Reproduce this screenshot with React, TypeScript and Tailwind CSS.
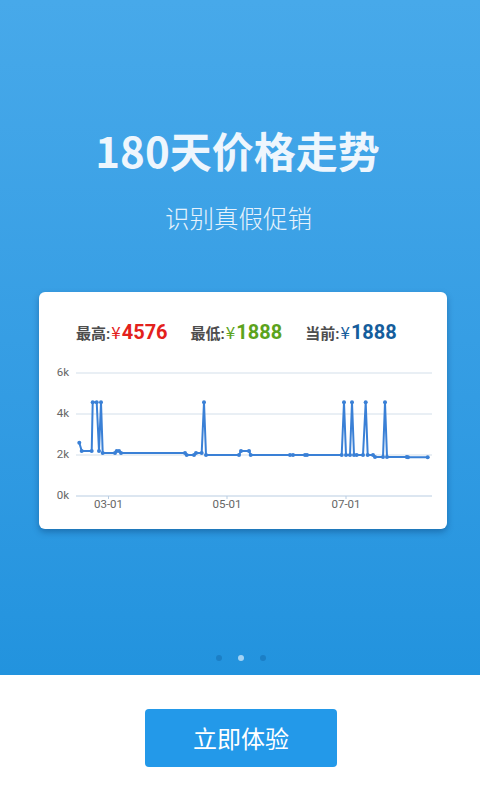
import React from "react";

// page x, price
const points: [number, number][] = [
  [79.3, 2600], [81.7, 2200], [91.7, 2200], [92.7, 4576], [96.7, 4576],
  [99, 2200], [101, 4576], [102.7, 2100], [115, 2100], [116.7, 2200],
  [119, 2200], [121, 2100], [185, 2100], [186.7, 2000], [194, 2000],
  [196, 2100], [201.7, 2100], [204, 4576], [206, 2000], [239, 2000],
  [241, 2200], [249, 2200], [250.7, 2000], [290, 2000], [293, 2000],
  [305, 2000], [307, 2000], [341.7, 2000], [344, 4576], [346, 2000],
  [350, 2000], [352, 4576], [354, 2000], [356.7, 2000], [363, 2000],
  [365.7, 4576], [367.7, 2000], [373, 2000], [375, 1900], [383, 1900],
  [385, 4576], [387, 1900], [406.7, 1900], [408, 1888], [427.7, 1888],
];

const toY = (v: number) => 142 - (v / 1000) * 20.5;

function PriceChart() {
  const coords = points.map(([x, v]) => [x - 39, toY(v)] as const);
  const d = coords.map(([x, y], i) => `${i ? "L" : "M"}${x.toFixed(1)} ${y.toFixed(1)}`).join(" ");
  const grid = [
    { label: "6k", y: 19 },
    { label: "4k", y: 60 },
    { label: "2k", y: 101 },
    { label: "0k", y: 142 },
  ];
  const xs = [
    { label: "03-01", x: 69.5 },
    { label: "05-01", x: 188 },
    { label: "07-01", x: 307 },
  ];
  return (
    <svg width="408" height="172" className="block" style={{ fontFamily: "Roboto, 'Noto Sans', sans-serif" }}>
      {grid.map((g) => (
        <g key={g.label}>
          <line x1="37" x2="393" y1={g.y} y2={g.y} stroke={g.label === "0k" ? "#b9cde2" : "#d3dfea"} strokeWidth="1" />
          <text x="30" y={g.y} textAnchor="end" dominantBaseline="middle" fontSize="11.5" fill="#666">
            {g.label}
          </text>
        </g>
      ))}
      {xs.map((t) => (
        <g key={t.label}>
          <line x1={t.x} x2={t.x} y1="142" y2="145" stroke="#b9cde2" />
          <text x={t.x} y="151" textAnchor="middle" dominantBaseline="middle" fontSize="11.5" fill="#666">
            {t.label}
          </text>
        </g>
      ))}
      <path d={d} fill="none" stroke="#3a80d6" strokeWidth="2" strokeLinejoin="round" />
      {coords.map(([x, y], i) => (
        <circle key={i} cx={x} cy={y} r="2" fill="#3a80d6" />
      ))}
    </svg>
  );
}

function Stat({ label, value, color }: { label: string; value: string; color: string }) {
  return (
    <div className="flex items-baseline">
      <span className="text-[15px] font-bold text-[#4d4d4d]">{label}</span>
      <span className="text-[15px] font-bold text-[#4d4d4d] font-[Roboto] mr-[1px]">:</span>
      <span className={`text-[17px] ${color}`}>¥</span>
      <span className={`text-[20px] font-bold font-[Roboto] ml-[1px] ${color}`}>{value}</span>
    </div>
  );
}

export default function App() {
  return (
    <div
      className="w-[480px] h-[800px] flex flex-col bg-white"
      style={{ fontFamily: "'Noto Sans CJK SC', 'Noto Sans', sans-serif" }}
    >
      <div className="h-[675px] flex flex-col items-center bg-gradient-to-b from-[#47a9ea] to-[#2293de]">
        <h1 className="pt-[126px] mr-[5px] text-[42px] leading-[48px] font-bold text-[#eef6fd]">180天价格走势</h1>
        <p className="mt-[28px] mr-[3px] text-[24.5px] leading-[32px] font-light text-[#e6f2fc]">识别真假促销</p>
        <div className="mt-[58px] self-start ml-[39px] w-[408px] h-[237px] rounded-[6px] bg-white shadow-[0_3px_6px_rgba(0,40,90,0.35)]">
          <div className="flex items-baseline pt-[29px] pl-[37px] gap-[23px] leading-[22px]">
            <Stat label="最高" value="4576" color="text-[#e3211c]" />
            <Stat label="最低" value="1888" color="text-[#5ca31c]" />
            <Stat label="当前" value="1888" color="text-[#155d9c]" />
          </div>
          <div className="mt-[9px]">
            <PriceChart />
          </div>
        </div>
        <div className="mt-[126px] flex gap-[16px] ml-[1px]">
          <span className="w-[6px] h-[6px] rounded-full bg-[#1b7fc6]" />
          <span className="w-[6px] h-[6px] rounded-full bg-[#a3d3f5]" />
          <span className="w-[6px] h-[6px] rounded-full bg-[#1b7fc6]" />
        </div>
      </div>
      <div className="flex justify-center pt-[34px]">
        <button className="w-[192px] h-[58px] ml-[2px] rounded-[4px] bg-[#2399e9] text-white text-[24px] leading-none">
          立即体验
        </button>
      </div>
    </div>
  );
}
